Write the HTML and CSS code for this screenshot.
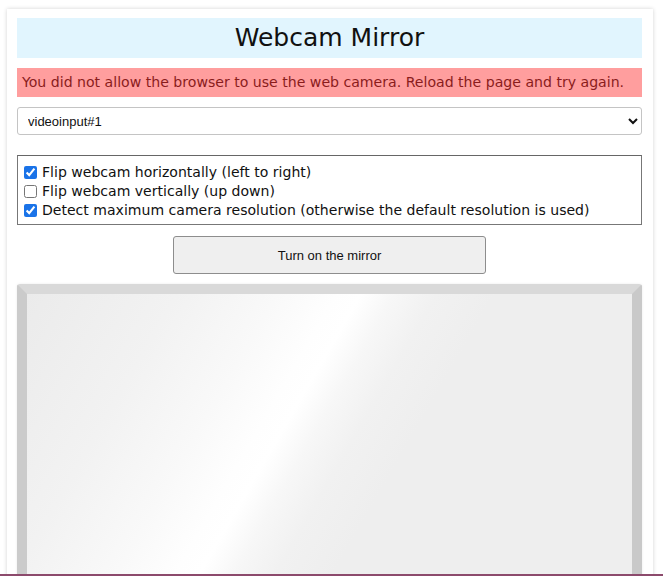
FILE: index.html
```html
<!DOCTYPE html>
<html lang="en">
<head>
<meta charset="utf-8">
<title>Webcam Mirror</title>
<link rel="stylesheet" href="styles.css">
</head>
<body>
<main class="page">
  <h1 class="title">Webcam Mirror</h1>
  <div class="error">You did not allow the browser to use the web camera. Reload the page and try again.</div>
  <select class="camera">
    <option>videoinput#1</option>
  </select>
  <fieldset class="options">
    <label class="opt"><input type="checkbox" checked> Flip webcam horizontally (left to right)</label>
    <label class="opt"><input type="checkbox"> Flip webcam vertically (up down)</label>
    <label class="opt"><input type="checkbox" checked> Detect maximum camera resolution (otherwise the default resolution is used)</label>
  </fieldset>
  <div class="actions">
    <button class="toggle" type="button">Turn on the mirror</button>
  </div>
  <div class="mirror"><div class="glass"></div></div>
</main>
<div class="bottom-line"></div>
</body>
</html>
```
FILE: styles.css
```css
html, body {
  margin: 0;
  padding: 0;
  background: #ffffff;
}
body {
  font-family: "DejaVu Sans", Verdana, sans-serif;
  color: #111;
  padding: 9px 10px 0 7px;
}
.page {
  background: #fff;
  box-shadow: 0 0 4px rgba(0,0,0,0.18);
  padding: 9px 11px 20px 10px;
  display: flex;
  flex-direction: column;
}
.title {
  margin: 0;
  background: #e1f5fe;
  height: 40px;
  line-height: 40px;
  text-align: center;
  font-weight: normal;
  font-size: 25px;
  color: #111;
}
.error {
  margin-top: 10px;
  background: #ff9e9e;
  color: #8a1c1c;
  font-size: 14.1px;
  height: 29px;
  line-height: 29px;
  padding: 0 5px;
  white-space: nowrap;
  overflow: hidden;
}
.camera {
  margin-top: 10px;
  height: 28px;
  font-family: "Liberation Sans", Arial, sans-serif;
  font-size: 13px;
  padding: 0 6px;
  border: 1px solid #c4c4c4;
  border-radius: 3px;
  background: #fff;
  color: #111;
}
.options {
  margin: 20px 0 0 0;
  padding: 7px 5px 4px 5px;
  border: 1px solid #777;
  border-top-color: #666;
  display: flex;
  flex-direction: column;
  min-width: 0;
}
.opt {
  font-size: 14.05px;
  line-height: 19px;
  height: 19px;
  display: flex;
  align-items: center;
  gap: 5px;
  white-space: nowrap;
  color: #111;
}
.opt input {
  margin: 0 0 0 1px;
  width: 13px;
  height: 13px;
  accent-color: #1a73e8;
}
.actions {
  margin-top: 11px;
  display: flex;
  justify-content: center;
}
.toggle {
  width: 313px;
  height: 38px;
  background: #efefef;
  border: 1px solid #8d8d8d;
  border-radius: 3px;
  font-family: "Liberation Sans", Arial, sans-serif;
  font-size: 13px;
  color: #111;
}
.mirror {
  margin-top: 10px;
  border: 10px solid;
  border-color: #d9d9d9 #c9c9c9 #c9c9c9 #cbcbcb;
  border-radius: 3px;
  box-shadow: 0 0 3px rgba(0,0,0,0.08);
}
.glass {
  height: 400px;
  background: linear-gradient(120deg, #ebebeb 0%, #f2f2f2 18%, #f9f9f9 30%, #fefefe 37%, #ffffff 40%, #f7f7f7 44%, #f1f1f1 49%, #eeeeee 56%, #eeeeee 100%);
}
.bottom-line {
  position: fixed;
  left: 0;
  right: 0;
  bottom: 0;
  height: 2px;
  background: #8c4a6c;
}
```
